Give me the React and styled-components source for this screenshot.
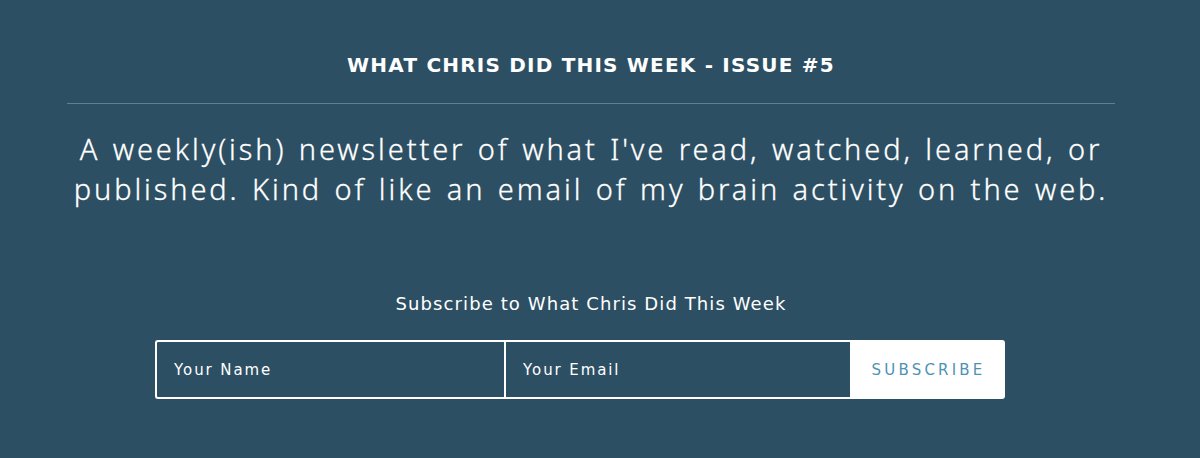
import React from "react";
import styled, { createGlobalStyle } from "styled-components";

const GlobalStyle = createGlobalStyle`
  html, body {
    margin: 0;
    padding: 0;
    background: #2d4f63;
  }
  body {
    font-family: "DejaVu Sans", "Open Sans", sans-serif;
    color: #ffffff;
  }
`;

const Page = styled.div`
  width: 1200px;
  height: 458px;
  box-sizing: border-box;
  background: #2d4f63;
  padding: 52px 85px 0 67px;
  display: flex;
  flex-direction: column;
`;

const Title = styled.h1`
  margin: 0;
  font-family: "DejaVu Sans", sans-serif;
  font-weight: 700;
  font-size: 20px;
  line-height: 26px;
  letter-spacing: 1.2px;
  text-align: center;
  text-transform: uppercase;
`;

const Divider = styled.hr`
  margin: 25px 0 0;
  border: 0;
  height: 1px;
  background: #60808f;
`;

const Intro = styled.p`
  margin: 25px 0 0;
  font-family: "Noto Sans", sans-serif;
  font-weight: 300;
  font-size: 29px;
  line-height: 40px;
  letter-spacing: 2.9px;
  word-spacing: 2px;
  text-align: center;
  -webkit-text-stroke: 0.3px #ffffff;
`;

const FormLabel = styled.p`
  margin: 83px 0 0;
  font-size: 18px;
  line-height: 24px;
  letter-spacing: 1.1px;
  text-align: center;
`;

const FormRow = styled.form`
  margin: 24px 0 0 88px;
  width: 850px;
  height: 59px;
  display: flex;
`;

const Field = styled.input`
  flex: 0 0 ${(p) => p.$width}px;
  box-sizing: border-box;
  height: 100%;
  margin: 0;
  padding: 0 0 0 17px;
  background: transparent;
  color: #ffffff;
  border: 2px solid #ffffff;
  border-right: ${(p) => (p.$first ? "0" : "2px solid #ffffff")};
  border-radius: ${(p) => (p.$first ? "3px 0 0 3px" : "0")};
  font-family: "DejaVu Sans", sans-serif;
  font-size: 15px;
  letter-spacing: 1.9px;
  outline: none;

  &::placeholder {
    color: #ffffff;
    opacity: 1;
  }
`;

const Button = styled.button`
  flex: 1;
  height: 100%;
  margin: 0;
  padding: 0;
  border: 0;
  border-radius: 0 3px 3px 0;
  background: #ffffff;
  color: #4d93b3;
  font-family: "DejaVu Sans", sans-serif;
  font-size: 15px;
  font-weight: 400;
  letter-spacing: 3.2px;
  text-transform: uppercase;
  cursor: pointer;
`;

export default function App() {
  return (
    <Page>
      <GlobalStyle />
      <Title>What Chris Did This Week - Issue #5</Title>
      <Divider />
      <Intro>
        A weekly(ish) newsletter of what I've read, watched, learned, or
        <br />
        published. Kind of like an email of my brain activity on the web.
      </Intro>
      <FormLabel>Subscribe to What Chris Did This Week</FormLabel>
      <FormRow onSubmit={(e) => e.preventDefault()}>
        <Field $first $width={349} type="text" placeholder="Your Name" />
        <Field $width={348} type="email" placeholder="Your Email" />
        <Button type="submit">Subscribe</Button>
      </FormRow>
    </Page>
  );
}
